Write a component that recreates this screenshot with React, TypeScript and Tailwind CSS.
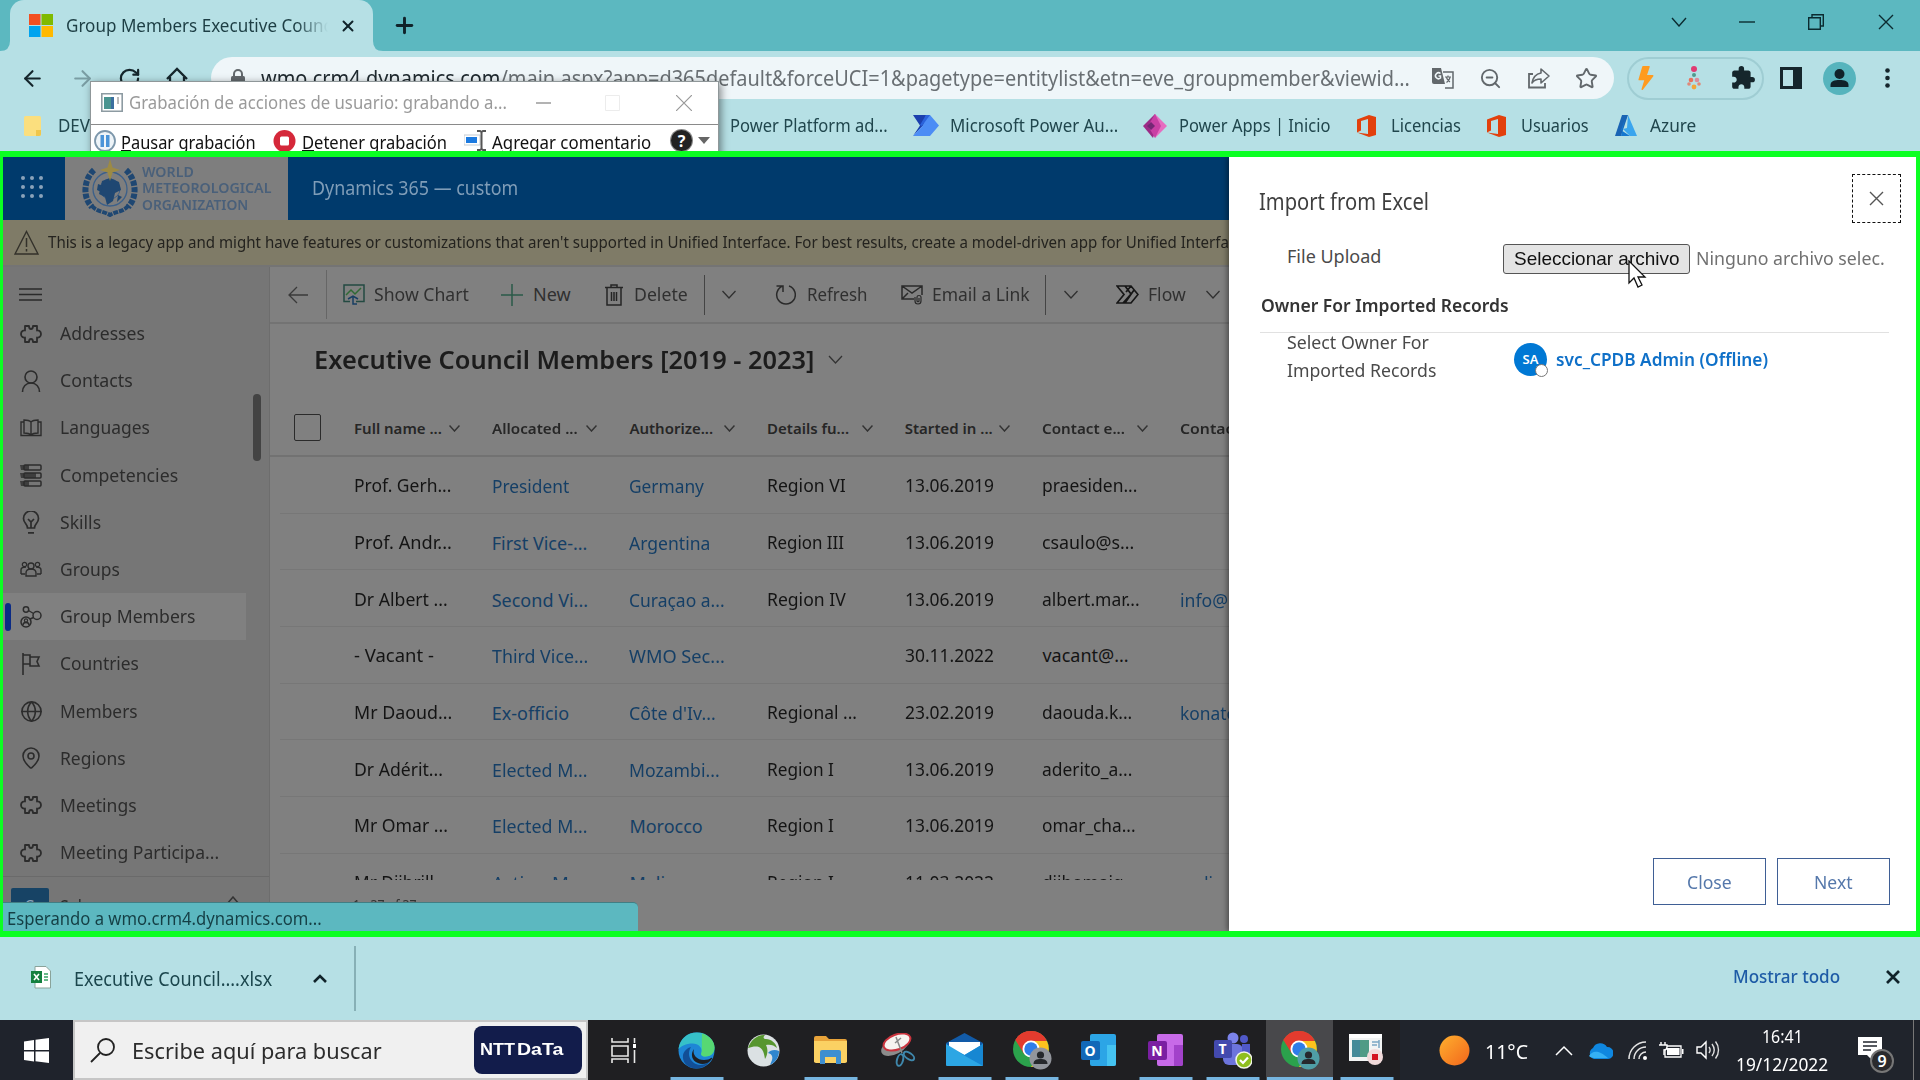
import React, { useLayoutEffect, useRef, useState } from "react";
import { ArrowLeft, ArrowRight, RotateCw, X, Plus, ZoomOut, Star, Globe, MapPin } from "lucide-react";
import { BsLightningFill } from "react-icons/bs";
import { MdExtension } from "react-icons/md";

/* A single line of text condensed or stretched to an exact advance width. */
function Fit({ w, children, className = "" }: { w: number; children: React.ReactNode; className?: string }) {
  const ref = useRef<HTMLSpanElement>(null);
  const [s, setS] = useState(1);
  useLayoutEffect(() => {
    if (ref.current) setS(w / ref.current.offsetWidth);
  }, [w]);
  return (
    <span className={"block shrink-0 " + className} style={{ width: w }}>
      <span ref={ref} className="inline-block origin-left whitespace-pre" style={{ transform: `scaleX(${s})` }}>
        {children}
      </span>
    </span>
  );
}

function Svg({ w, h, box, className = "", children }: { w: number; h: number; box?: string; className?: string; children: React.ReactNode }) {
  return (
    <svg width={w} height={h} viewBox={box ?? `0 0 ${w} ${h}`} fill="none" className={"shrink-0 " + className}>
      {children}
    </svg>
  );
}

/* ---------- browser chrome ---------- */

function TabStrip() {
  return (
    <div className="flex h-[51px] bg-[#5cb8c0]">
      <div className="relative ml-[10px] flex h-full w-[363px] items-center rounded-t-[14px] bg-[#b6e0e5] pl-[19px]">
        <Svg w={24} h={23}>
          <path d="M0 0h11.5v11H0z" fill="#f25022" />
          <path d="M12.5 0H24v11H12.5z" fill="#7fba00" />
          <path d="M0 12h11.5v11H0z" fill="#00a4ef" />
          <path d="M12.5 12H24v11H12.5z" fill="#ffb900" />
        </Svg>
        <div className="ml-[13px] w-[262px] overflow-hidden text-[18px] text-[#1d3e44] [mask-image:linear-gradient(90deg,#000_88%,transparent)]">
          <Fit w={270}>Group Members Executive Counci</Fit>
        </div>
        <X size={18} strokeWidth={2.6} className="ml-[11px] text-[#10232a]" />
        <Svg w={10} h={10} className="absolute bottom-0 -left-[10px]"><path d="M10 0v10H0Q10 10 10 0z" fill="#b6e0e5" /></Svg>
        <Svg w={10} h={10} className="absolute -right-[10px] bottom-0"><path d="M0 0v10h10Q0 10 0 0z" fill="#b6e0e5" /></Svg>
      </div>
      <div className="ml-[19px] flex w-[22px] items-center"><Plus size={25} strokeWidth={2.8} className="shrink-0 text-[#10232a]" /></div>
      <div className="ml-auto flex h-[43px] items-center text-[#0b2b30]">
        <div className="flex w-[68px] justify-center"><Svg w={16} h={10}><path d="M1 1l7 8 7-8" stroke="currentColor" strokeWidth="1.4" /></Svg></div>
        <div className="flex w-[68px] justify-center"><Svg w={16} h={2}><path d="M0 1h16" stroke="currentColor" strokeWidth="1.4" /></Svg></div>
        <div className="flex w-[70px] justify-center"><Svg w={16} h={16}><path d="M.7 3.7h11.6v11.6H.7zM4 3.500V.7h11.300v11.300h-3" stroke="currentColor" strokeWidth="1.4" /></Svg></div>
        <div className="flex w-[69px] justify-center"><Svg w={16} h={16}><path d="M1 1l14 14M15 1L1 15" stroke="currentColor" strokeWidth="1.4" /></Svg></div>
      </div>
    </div>
  );
}

function Toolbar() {
  return (
    <div className="flex h-[54px] items-center text-[#15262c]">
      <ArrowLeft size={25} strokeWidth={2} className="ml-[20px] shrink-0" />
      <ArrowRight size={25} strokeWidth={2} className="ml-[25px] shrink-0 text-[#7a9da3]" />
      <RotateCw size={23} strokeWidth={2.300} className="ml-[23px] shrink-0" />
      <Svg w={24} h={24} className="ml-[24px]"><path d="M2 13L12 3l10 10M5 11v10h14V11" stroke="currentColor" strokeWidth="2.300" /></Svg>
      <div className="ml-[22px] flex h-[42px] w-[1403px] items-center rounded-full bg-[#eff6f9] text-[#62686c]">
        <Svg w={14} h={19} className="ml-[20px]"><rect y="7" width="14" height="12" rx="1.500" fill="#62686c" /><path d="M3 8V5a4 4 0 018 0v3" stroke="#62686c" strokeWidth="2" /></Svg>
        <Fit w={1149} className="mt-[2px] ml-[16px] text-[21px] text-[#696f73]">
          <span className="text-[#202a30]">wmo.crm4.dynamics.com</span>/main.aspx?app=d365default&amp;forceUCI=1&amp;pagetype=entitylist&amp;etn=eve_groupmember&amp;viewid...
        </Fit>
        <Svg w={22} h={22} className="ml-[22px]">
          <path d="M0 1h9l4 16H2a2 2 0 01-2-2z" fill="#62686c" />
          <path d="M11 5h10v16h-8" stroke="#62686c" strokeWidth="1.500" />
          <path d="M8.500 6.500a3 3 0 100 4.500V9H6.500" stroke="#eff6f9" strokeWidth="1.500" />
          <path d="M13 10h6M16 8.500V10M14.500 10.500c.500 2 2 3.500 3.500 4.500M18 10.500c-.500 2-2 4-3.500 5" stroke="#62686c" strokeWidth="1.200" />
        </Svg>
        <ZoomOut size={23} strokeWidth={2} className="ml-[25px] shrink-0" />
        <Svg w={24} h={22} className="ml-[25px]">
          <path d="M6 7H2v13.500h16V16" stroke="#62686c" strokeWidth="1.800" />
          <path d="M14 2l8 7-8 7v-4c-4 0-7 1-9 4 1-6 4-9 9-10z" stroke="#62686c" strokeWidth="1.600" strokeLinejoin="round" />
        </Svg>
        <Star size={23} strokeWidth={2} className="ml-[24px] shrink-0" />
      </div>
      <div className="ml-[13px] flex h-[43px] w-[137px] items-center rounded-full border-2 border-[#9fcdd3]">
        <BsLightningFill size={24} className="ml-[5px] shrink-0 text-[#ff9b1f]" />
        <Svg w={14} h={24} className="ml-[29px]">
          <circle cx="7" cy="3" r="3" fill="#e03a72" /><circle cx="7" cy="9" r="2" fill="#4f9a8c" />
          <circle cx="4" cy="14" r="2.300" fill="#e8705c" /><circle cx="10" cy="14" r="2.300" fill="#d98c9a" />
          <circle cx="2" cy="18" r="1.800" fill="#e08878" /><circle cx="12" cy="18" r="1.800" fill="#e08878" /><circle cx="7" cy="21" r="2.400" fill="#f0a63a" />
        </Svg>
        <MdExtension size={26} className="ml-[29px] shrink-0" />
      </div>
      <Svg w={22} h={22} className="ml-[16px]"><rect x="1.500" y="1.500" width="19" height="19" stroke="currentColor" strokeWidth="3" /><path d="M13 1h8v20h-8z" fill="currentColor" /></Svg>
      <Svg w={33} h={33} className="ml-[21px]"><circle cx="16.500" cy="16.500" r="16.500" fill="#56b4bd" /><circle cx="16.500" cy="12" r="5" fill="#10232a" /><path d="M7.500 25v-2c0-4 4-5 9-5s9 1 9 5v2z" fill="#10232a" /></Svg>
      <Svg w={5} h={20} className="ml-[29px]"><circle cx="2.500" cy="2.500" r="2.300" fill="currentColor" /><circle cx="2.500" cy="10" r="2.300" fill="currentColor" /><circle cx="2.500" cy="17.500" r="2.300" fill="currentColor" /></Svg>
    </div>
  );
}

const Office = () => (
  <Svg w={20} h={22}><path d="M0 4.500L12 0l7 2v18l-7 2L0 17.500l11 1.500V4L4 6v9.500l-4 2z" fill="#e2400c" /></Svg>
);

function Bookmarks() {
  return (
    <div className="flex h-[41px] items-center text-[18px] text-[#20464d]">
      <Svg w={17} h={20} className="ml-[24px]"><rect width="17" height="20" rx="1.500" fill="#fbdf7e" /><path d="M12 14h5v4a2 2 0 01-2 2h-3z" fill="#f0c64a" /></Svg>
      <Fit w={32} className="ml-[17px]">DEV</Fit>
      <Fit w={158} className="ml-[640px]">Power Platform ad...</Fit>
      <Svg w={26} h={21} className="ml-[25px]">
        <path d="M0 0h17l-7 10.500L0 21l7-10.500z" fill="#1b3fae" /><path d="M17 0l9 10.500L17 21H0l10-10.500L13 0z" fill="#4c8df5" /><path d="M13 0h4l-8 11-2-1z" fill="#2b63db" />
      </Svg>
      <Fit w={168} className="ml-[11px]">Microsoft Power Au...</Fit>
      <Svg w={24} h={24} className="ml-[25px]">
        <path d="M12 0L0 12l10 12 4-12z" fill="#9c2a86" /><path d="M12 0l12 12-12 12-3-12z" fill="#e66cc0" /><path d="M12 0l6 12-6 12-7-12z" fill="#c93fa4" /><path d="M8 8l4 4-4 4-4-4z" fill="#742774" />
      </Svg>
      <Fit w={151} className="ml-[12px]">Power Apps | Inicio</Fit>
      <div className="ml-[27px]"><Office /></div>
      <Fit w={70} className="ml-[14px]">Licencias</Fit>
      <div className="ml-[26px]"><Office /></div>
      <Fit w={68} className="ml-[14px]">Usuarios</Fit>
      <Svg w={22} h={21} className="ml-[26px]">
        <path d="M7 0h6L6 21H0z" fill="#1a64b4" /><path d="M13 0l9 21h-7L8 14l4-1z" fill="#3aa5ee" /><path d="M10 4l-4 11 9 6H6z" fill="#1577cf" />
      </Svg>
      <Fit w={46} className="ml-[13px]">Azure</Fit>
    </div>
  );
}

function RecorderWindow() {
  return (
    <div className="absolute top-[81px] left-[90px] h-[76px] w-[629px] overflow-hidden border border-[#8f9799] bg-white shadow-[2px_2px_8px_rgba(0,0,0,0.45)]">
      <div className="flex h-[43px] items-center border-b border-[#8a8a8a] pb-px text-[#9a9a9a]">
        <Svg w={22} h={19} className="ml-[10px]"><path d="M.8.800h20.400v17.400H.8z" fill="#fff" stroke="#8d9ba2" strokeWidth="1.600" /><path d="M3 4h10v12H3z" fill="#4a9490" /><path d="M10 4h3v12h-3z" fill="#3b6f9f" /><path d="M17 4v7" stroke="#777" /></Svg>
        <Fit w={378} className="ml-[6px] text-[18px]">Grabación de acciones de usuario: grabando a...</Fit>
        <Svg w={15} h={2} className="ml-[29px]"><path d="M0 1h15" stroke="#8a8a8a" strokeWidth="1.300" /></Svg>
        <Svg w={15} h={16} className="ml-[54px]"><path d="M.5.500h14v15H.5z" stroke="#ececec" /></Svg>
        <Svg w={16} h={16} className="ml-[56px]"><path d="M0 0l16 16M16 0L0 16" stroke="#999" strokeWidth="1.200" /></Svg>
      </div>
      <div className="flex h-[31px] items-center text-[18px] text-[#111]">
        <Svg w={22} h={22} className="ml-[3px]"><circle cx="11" cy="11" r="10" fill="#eef4f8" stroke="#7d97ab" strokeWidth="1.800" /><path d="M6.500 5h3.500v12H6.500zM12 5h3.500v12H12z" fill="#4b94d8" /></Svg>
        <Fit w={135} className="mt-[4px] ml-[5px]"><u>P</u>ausar grabación</Fit>
        <Svg w={23} h={22} className="ml-[17px]"><circle cx="11.500" cy="11" r="11" fill="#d5283a" /><rect x="7" y="6.500" width="9" height="9" rx="1.500" fill="#fff" /></Svg>
        <Fit w={145} className="mt-[4px] ml-[6px]"><u>D</u>etener grabación</Fit>
        <Svg w={22} h={22} className="ml-[17px]"><path d="M0 5h16v10H0z" fill="#fff" stroke="#c3cbd3" /><path d="M2 7h11v6H2z" fill="#1c7ae0" /><path d="M13 1h3l1.500 1L19 1h3M13 20h3l1.500-1 1.500 1h3M17.500 2v17" stroke="#555" strokeWidth="2" /></Svg>
        <Fit w={159} className="mt-[4px] ml-[6px]">A<u>g</u>regar comentario</Fit>
        <div className="ml-[20px] flex size-[21px] shrink-0 items-center justify-center rounded-full bg-[#222] text-[16px] font-bold text-white ring-1 ring-[#888]">?</div>
        <Svg w={12} h={7} className="ml-[6px]"><path d="M0 0h12L6 7z" fill="#666" /></Svg>
      </div>
    </div>
  );
}

/* ---------- application ---------- */

function Emblem() {
  return (
    <Svg w={56} h={58}>
      <path d="M12 11C2 20 0 38 10 48M44 11c10 9 12 27 2 37" stroke="#1f4772" strokeWidth="6" strokeDasharray="5 1.500" />
      <path d="M10 47c5 6 11 5 18 9 7-4 13-3 18-9" stroke="#1f4772" strokeWidth="4" strokeDasharray="5 1" />
      <circle cx="28" cy="30" r="17" stroke="#3c608a" strokeWidth="1.300" />
      <circle cx="28" cy="30" r="10" stroke="#3c608a" strokeWidth="1" />
      <path d="M20 22l8-3 9 4 2 8-6 3-2 8-6 4-2-8-6-3z" fill="#1f4772" />
      <path d="M16 25l5 2-2 6-4-2zM36 36l4 2-5 5z" fill="#1f4772" />
      <path d="M28 0l2.500 8.500L38 11l-7.500 2.500L28 22l-2.500-8.500L18 11l7.500-2.500z" fill="#9c8a45" />
    </Svg>
  );
}

function AppHeader() {
  return (
    <div className="flex h-[63px] shrink-0 items-center bg-[#003a6c]">
      <div className="flex h-full w-[62px] shrink-0 items-center pb-[4px] pl-[18px]">
        <div className="grid grid-cols-3 gap-x-[5px] gap-y-[5px]">
          {Array.from({ length: 9 }, (_, i) => <span key={i} className="size-[4px] rounded-full bg-[#8aa2ba]" />)}
        </div>
      </div>
      <div className="flex h-full w-[223px] shrink-0 items-center bg-[#7e7e7e] pb-[2px] pl-[17px]">
        <Emblem />
        <div className="ml-[4px] text-[15px] leading-[16.500px] font-semibold text-[#4a607a]">
          <Fit w={52}>WORLD</Fit>
          <Fit w={129}>METEOROLOGICAL</Fit>
          <Fit w={106}>ORGANIZATION</Fit>
        </div>
      </div>
      <Fit w={206} className="ml-[24px] text-[19px] text-[#7f9db8]">Dynamics 365 — custom</Fit>
    </div>
  );
}

const Chev = ({ w = 15, className = "" }: { w?: number; className?: string }) => (
  <Svg w={w} h={9} box="0 0 15 9" className={className}><path d="M1 1l6.500 7L14 1" stroke="currentColor" strokeWidth="1.300" /></Svg>
);

const PuzzleIcon = () => (
  <Svg w={22} h={20} box="0 0 22 20">
    <path d="M5 2h4c0 1.500.500 3 2 3s2-1.500 2-3h4v4.500c1.500-.5 4 .5 4 3.500s-2.500 4-4 3.500V18h-4c0-1.500-.5-3-2-3s-2 1.500-2 3H5v-4.500C3.500 14 1 13 1 10s2.500-4 4-3.500z" stroke="currentColor" strokeWidth="1.800" strokeLinejoin="round" />
  </Svg>
);

const icons: Record<string, React.ReactNode> = {
  puzzle: <PuzzleIcon />,
  person: <Svg w={20} h={22}><circle cx="10" cy="7" r="6" stroke="currentColor" strokeWidth="1.600" /><path d="M1.500 22c0-5.500 3.500-9 8.500-9s8.500 3.500 8.500 9" stroke="currentColor" strokeWidth="1.600" /></Svg>,
  book: <Svg w={22} h={18}><path d="M11 3c-2-2-4-2-7-2v13c3 0 5 0 7 2 2-2 4-2 7-2V1c-3 0-5 0-7 2zM11 3v13M4 3H1v13.500h20V3h-3" stroke="currentColor" strokeWidth="1.400" /></Svg>,
  stack: <Svg w={22} h={23}><rect x="4" y="1" width="17" height="5" rx="1" stroke="currentColor" strokeWidth="1.500" /><rect x="4" y="9" width="17" height="5" rx="1" stroke="currentColor" strokeWidth="1.500" /><rect x="4" y="17" width="17" height="5" rx="1" stroke="currentColor" strokeWidth="1.500" /><path d="M0 1h9v5H1zM0 9h16v5H1zM0 17h9v5H1z" fill="currentColor" fillOpacity=".75" /></Svg>,
  bulb: <Svg w={18} h={23}><path d="M5.500 17c0-4-4-5-4-9.500a7.500 7.500 0 0115 0c0 4.500-4 5.500-4 9.500zM6 21.800h6M6 8l3 3 3-3M9 11v6" stroke="currentColor" strokeWidth="1.700" /></Svg>,
  groups: <Svg w={22} h={17}><circle cx="11" cy="5" r="3" stroke="currentColor" strokeWidth="1.400" /><circle cx="4.500" cy="3.500" r="2.200" stroke="currentColor" strokeWidth="1.200" /><circle cx="17.500" cy="3.500" r="2.200" stroke="currentColor" strokeWidth="1.200" /><path d="M6 15V12c0-2.500 2-4 5-4s5 1.500 5 4v3zM1 13V9c0-2 2-3 5-3M21 13V9c0-2-2-3-5-3M1 13h4M17 13h4" stroke="currentColor" strokeWidth="1.400" /></Svg>,
  members: <Svg w={22} h={22}><circle cx="6" cy="3.500" r="2.700" stroke="currentColor" strokeWidth="1.500" /><circle cx="17" cy="9.500" r="4" stroke="currentColor" strokeWidth="1.500" /><circle cx="6" cy="16" r="5" stroke="currentColor" strokeWidth="1.500" /><circle cx="6" cy="14.500" r="1.600" stroke="currentColor" strokeWidth="1.200" /><path d="M3 19c0-2 1.500-2.500 3-2.500s3 .5 3 2.500M8.500 4.500l5 3M10 13l3.500-1.500" stroke="currentColor" strokeWidth="1.400" /></Svg>,
  flag: <Svg w={20} h={22}><path d="M2 0v22M2 2h7v9H2M9 4h9l-2 4.500 2 4.500H9V4" stroke="currentColor" strokeWidth="1.600" /></Svg>,
  globe: <Globe size={23} strokeWidth={1.7} />,
  pin: <MapPin size={24} strokeWidth={1.6} />,
};

const nav: [string, string, number][] = [
  ["puzzle", "Addresses", 85], ["person", "Contacts", 73], ["book", "Languages", 90], ["stack", "Competencies", 118],
  ["bulb", "Skills", 41], ["groups", "Groups", 60], ["members", "Group Members", 136], ["flag", "Countries", 79],
  ["globe", "Members", 78], ["pin", "Regions", 66], ["puzzle", "Meetings", 77], ["puzzle", "Meeting Participa...", 159],
];

function Sidebar() {
  return (
    <div className="relative flex w-[267px] shrink-0 flex-col border-r border-[#6d6d6d] bg-[#767676] text-[#2c2c2c]">
      <div className="flex h-[43px] shrink-0 items-end pb-[9px] pl-[16px]">
        <Svg w={23} h={13}><path d="M0 1h23M0 6.500h23M0 12h23" stroke="#2a2a2a" strokeWidth="1.400" /></Svg>
      </div>
      <div className="flex shrink-0 flex-col">
        {nav.map(([icon, label, w]) => (
          <div key={label} className={"flex h-[47.200px] w-[243px] items-center " + (label === "Group Members" ? "bg-[#808080]" : "")}>
            <span className={"ml-[2px] h-[28px] w-[6px] rounded-full " + (label === "Group Members" ? "bg-[#0a2a85]" : "")} />
            <span className="ml-[7px] flex w-[26px] justify-center">{icons[icon]}</span>
            <Fit w={w} className="ml-[16px] text-[18px]">{label}</Fit>
          </div>
        ))}
      </div>
      <div className="flex h-[60px] shrink-0 items-start border-t border-[#6a6a6a] pt-[11px]">
        <div className="ml-[8px] flex h-[38px] w-[38px] justify-center rounded-[2px] bg-[#174365] pt-[5px] text-[17px] text-[#90a5b8]">S</div>
        <Fit w={38} className="mt-[5px] ml-[11px] text-[18px]">Sales</Fit>
        <Svg w={14} h={9} className="mt-[8px] ml-[128px]"><path d="M1 8l6-7 6 7" stroke="#333" strokeWidth="1.500" /></Svg>
      </div>
      <span className="absolute top-[127px] right-[8px] h-[67px] w-[8px] rounded-full bg-[#434343]" />
    </div>
  );
}

function CommandBar() {
  return (
    <div className="flex h-[57px] shrink-0 items-center border-b-2 border-[#737373] text-[18px] text-[#303030]">
      <Svg w={20} h={18} className="ml-[18px]"><path d="M20 9H1M9 1L1 9l8 8" stroke="#3a3a3a" strokeWidth="1.300" /></Svg>
      <span className="ml-[18px] h-[49px] w-px shrink-0 bg-[#666]" />
      <Svg w={22} h={21} className="ml-[16px]"><path d="M13 17.500h8V1H1v16.500h6" stroke="#234a42" strokeWidth="1.500" /><path d="M3 11l5-5 4 4 6-6" stroke="#2f6a34" strokeWidth="1.500" /><path d="M5 15l5-3 5 3M10 13v7h4" stroke="#173e63" strokeWidth="1.500" /></Svg>
      <Fit w={95} className="ml-[9px]">Show Chart</Fit>
      <Svg w={22} h={22} className="ml-[32px]"><path d="M11 0v22M0 11h22" stroke="#2a5a48" strokeWidth="1.500" /></Svg>
      <Fit w={38} className="ml-[10px]">New</Fit>
      <Svg w={18} h={22} className="ml-[34px]"><path d="M0 3.500h18M6 3V1h6v2M2 4v17h14V4M6.500 8v9M9 8v9M11.500 8v9" stroke="#252525" strokeWidth="1.500" /></Svg>
      <Fit w={54} className="ml-[11px]">Delete</Fit>
      <span className="ml-[16px] h-[40px] w-px shrink-0 bg-[#444]" />
      <Chev w={16} className="ml-[16px]" />
      <Svg w={21} h={22} className="ml-[38px]"><path d="M8 2a9.300 9.300 0 106 0M1.500 2H8v6" stroke="#2a2a2a" strokeWidth="1.500" /></Svg>
      <Fit w={61} className="ml-[11px]">Refresh</Fit>
      <Svg w={22} h={20} className="ml-[33px]"><path d="M13 14H1V1h20v9M1 1l10 7L21 1M1 14l6-6" stroke="#2a2a2a" strokeWidth="1.500" /><path d="M14 12v4c0 4 6 4 6 0v-4c0-2-4-2-4 0v4c0 1 2 1 2 0v-3" stroke="#2a2a2a" strokeWidth="1.200" /></Svg>
      <Fit w={98} className="ml-[9px]">Email a Link</Fit>
      <span className="ml-[15px] h-[40px] w-px shrink-0 bg-[#444]" />
      <Chev w={16} className="ml-[17px]" />
      <Svg w={23} h={19} className="ml-[37px]"><path d="M1 1h14l7 8.500-7 8.500H1l7-8.500zM9 1l6 8-8 9M15 1l-5 6M18 5l-9 13" stroke="#161616" strokeWidth="1.700" /></Svg>
      <Fit w={38} className="ml-[9px]">Flow</Fit>
      <Chev w={16} className="ml-[19px]" />
    </div>
  );
}

const columns: [string, number][] = [
  ["Full name ...", 88], ["Allocated ...", 86], ["Authorize...", 84], ["Details fu...", 82], ["Started in ...", 88], ["Contact e...", 83], ["Contact", 60],
];

const rows: string[][] = [
  ["Prof. Gerh...", "President", "Germany", "Region VI", "13.06.2019", "praesiden...", ""],
  ["Prof. Andr...", "First Vice-...", "Argentina", "Region III", "13.06.2019", "csaulo@s...", ""],
  ["Dr Albert ...", "Second Vi...", "Curaçao a...", "Region IV", "13.06.2019", "albert.mar...", "info@"],
  ["- Vacant -", "Third Vice...", "WMO Sec...", "", "30.11.2022", "vacant@...", ""],
  ["Mr Daoud...", "Ex-officio", "Côte d'Iv...", "Regional ...", "23.02.2019", "daouda.k...", "konate"],
  ["Dr Adérit...", "Elected M...", "Mozambi...", "Region I", "13.06.2019", "aderito_a...", ""],
  ["Mr Omar ...", "Elected M...", "Morocco", "Region I", "13.06.2019", "omar_cha...", ""],
  ["Mr Djibrill...", "Acting M...", "Mali", "Region I", "11.03.2022", "djibomaig...", "sadig"],
];

const widths: number[][] = [
  [97, 77, 75, 79, 89, 95, 0], [98, 96, 81, 77, 89, 92, 0], [94, 96, 96, 79, 89, 98, 48], [80, 96, 96, 0, 89, 86, 0],
  [98, 77, 87, 90, 89, 90, 56], [89, 96, 91, 67, 89, 90, 0], [94, 96, 73, 67, 89, 94, 0], [94, 92, 36, 67, 89, 95, 44],
];

function Grid() {
  return (
    <div className="flex h-[480px] shrink-0 flex-col overflow-hidden">
      <div className="flex h-[57px] shrink-0 items-center border-b-2 border-[#727272]">
        <span className="ml-[24px] size-[27px] shrink-0 rounded-[2px] border-[1.500px] border-[#2b2b2b]" />
        <div className="ml-[33px] flex pt-px">
          {columns.map(([label, w]) => (
            <div key={label} className="flex w-[137.700px] shrink-0 items-center justify-between pr-[32px] text-[15px] font-semibold text-[#262626]">
              <Fit w={w}>{label}</Fit>
              {label !== "Contact" && <Svg w={11} h={7}><path d="M.5.500l5 5.500 5-5.500" stroke="#333" strokeWidth="1.500" /></Svg>}
            </div>
          ))}
        </div>
      </div>
      {rows.map((cells, r) => (
        <div key={r} className="ml-[10px] flex h-[56.700px] shrink-0 items-center border-b border-[#777] pt-[2px] pl-[74px] text-[18px]">
          {cells.map((cell, c) => {
            const link = c === 1 || c === 2 || c === 6;
            return (
              <div key={c} className={"w-[137.700px] shrink-0 " + (link ? "pt-[2px] text-[#153f66]" : "text-[#141414]")}>
                {cell && <Fit w={widths[r][c]}>{cell}</Fit>}
              </div>
            );
          })}
        </div>
      ))}
    </div>
  );
}

function ImportPanel() {
  return (
    <div className="relative flex w-[687px] shrink-0 flex-col bg-white text-[#3f3f3f] shadow-[-2px_0_5px_rgba(0,0,0,0.4)]">
      <div className="flex h-[66px] pl-[30px]">
        <Fit w={170} className="mt-[27px] text-[23px] leading-[34px]">Import from Excel</Fit>
        <div className="mt-[17px] ml-[423px] flex h-[49px] w-[49px] items-center justify-center border border-dashed border-[#111]">
          <Svg w={15} h={15}><path d="M1 1l13 13M14 1L1 14" stroke="#555" strokeWidth="1.400" /></Svg>
        </div>
      </div>
      <div className="mt-[21px] flex h-[30px] pl-[58px] text-[18px]">
        <Fit w={94} className="leading-[25px] text-[#4a4a4a]">File Upload</Fit>
        <div className="ml-[122px] flex h-[30px] w-[187px] items-center justify-center rounded-[3px] border border-[#555] bg-[#e4e4e4] font-['Liberation_Sans'] text-[18.500px] text-[#111]">
          <Fit w={165}>Seleccionar archivo</Fit>
        </div>
        <Fit w={189} className="ml-[6px] leading-[29px] text-[#717171]">Ninguno archivo selec.</Fit>
      </div>
      <div className="mt-[17px] ml-[31px] h-[42px] w-[629px] border-b border-[#e1e1e1]">
        <Fit w={248} className="ml-px text-[18px] leading-[29px] font-semibold text-[#333]">Owner For Imported Records</Fit>
      </div>
      <div className="flex pl-[58px]">
        <div className="w-[216px] shrink-0 text-[18px] leading-[28px] text-[#4a4a4a]">
          <Fit w={142} className="-mt-[5px]">Select Owner For</Fit>
          <Fit w={149}>Imported Records</Fit>
        </div>
        <div className="mt-[10px] ml-[11px] flex h-[33px] items-center">
          <div className="relative flex size-[33px] items-center justify-center rounded-full bg-[#0078d4] text-[13px] font-semibold text-white">
            SA
            <span className="absolute -right-[1px] -bottom-[1px] size-[13px] rounded-full border border-[#777] bg-white" />
          </div>
          <Fit w={212} className="ml-[9px] text-[18px] font-semibold text-[#0f70c8]">svc_CPDB Admin (Offline)</Fit>
        </div>
      </div>
      <div className="mt-auto mb-[26px] flex justify-end gap-[11px] pr-[26px] text-[18px] text-[#5578ab]">
        <div className="flex h-[47px] w-[113px] items-center justify-center border border-[#3f5f95] pt-px"><Fit w={45}>Close</Fit></div>
        <div className="flex h-[47px] w-[113px] items-center justify-center border border-[#3f5f95] pt-px"><Fit w={39}>Next</Fit></div>
      </div>
      <Svg w={19} h={29} className="absolute top-[103px] left-[399px]">
        <path d="M1 1v22l5-5 4 9 4-2-4-8h7z" fill="#fff" stroke="#111" strokeWidth="1.300" />
      </Svg>
    </div>
  );
}

function AppFrame() {
  return (
    <div className="relative flex h-[786px] overflow-hidden border-y-[6px] border-r-[4px] border-l-[3px] border-[#0bff22] bg-[#808080]">
      <div className="flex w-[1226px] shrink-0 flex-col overflow-hidden">
        <AppHeader />
        <div className="flex h-[45px] shrink-0 items-center bg-[#7f7b67] text-[15.500px] text-[#24231f]">
          <Svg w={25} h={25} className="ml-[11px]"><path d="M12.500 1.500L24 24H1z" stroke="#33312a" strokeWidth="1.400" /><path d="M12.500 8v9M12.500 19v2.500" stroke="#33312a" strokeWidth="1.500" /></Svg>
          <Fit w={1181} className="ml-[9px]">This is a legacy app and might have features or customizations that aren't supported in Unified Interface. For best results, create a model-driven app for Unified Interfa</Fit>
        </div>
        <div className="flex min-h-0 grow border-t-2 border-[#747474]">
          <Sidebar />
          <div className="flex w-[959px] shrink-0 flex-col">
            <CommandBar />
            <div className="flex h-[76px] shrink-0 items-center pb-[6px] pl-[44px]">
              <Fit w={501} className="text-[26px] font-semibold text-[#1c1c1c]">Executive Council Members [2019 - 2023]</Fit>
              <Chev w={17} className="ml-[12px] text-[#333]" />
            </div>
            <Grid />
            <Fit w={64} className="mt-[13px] ml-[83px] text-[15px] leading-[22px] text-[#333]">1 - 37 of 37</Fit>
          </div>
        </div>
      </div>
      <ImportPanel />
      <div className="absolute bottom-0 left-0 flex h-[29px] w-[635px] items-center rounded-tr-[5px] border-t border-[#417e84] bg-[#5cb8c0] pt-[3px] pl-[4px] text-[17.500px] text-[#153f45]">
        <Fit w={315}>Esperando a wmo.crm4.dynamics.com...</Fit>
      </div>
    </div>
  );
}

/* ---------- downloads shelf and task bar ---------- */

function Downloads() {
  return (
    <div className="flex h-[83px] items-center bg-[#b6e0e5] text-[#1b464d]">
      <Svg w={20} h={23} className="-mt-[3px] ml-[31px]"><path d="M4 .500h11l4.500 4.500v17H4z" fill="#fff" stroke="#8aa39a" /><path d="M0 5h11v12H0z" fill="#14803f" /><path d="M3 8l5 6M8 8l-5 6" stroke="#fff" strokeWidth="1.600" /><path d="M13 8h4M13 11h4M13 14h4" stroke="#37a163" strokeWidth="1.500" /></Svg>
      <Fit w={198} className="mt-[2px] ml-[23px] text-[19px]">Executive Council....xlsx</Fit>
      <Svg w={14} h={9} className="ml-[41px]"><path d="M1 8l6-6 6 6" stroke="#10232a" strokeWidth="2.600" /></Svg>
      <span className="ml-[27px] h-[65px] w-[2px] bg-[#87b0b6]" />
      <Fit w={107} className="-mt-[5px] ml-auto text-[18px] font-medium text-[#1e5ba6]">Mostrar todo</Fit>
      <Svg w={14} h={14} className="-mt-[3px] mr-[20px] ml-[46px]"><path d="M1 1l12 12M13 1L1 13" stroke="#10232a" strokeWidth="2.700" /></Svg>
    </div>
  );
}

function Chrome({ badge }: { badge: string }) {
  return (
    <Svg w={40} h={40}>
      <circle cx="19" cy="19" r="18" fill="#2ba24c" />
      <path d="M19 19L3.400 10A18 18 0 0134.600 10z" fill="#e33b2e" /><path d="M19 1a18 18 0 00-15.600 9L12 24l7-13h15.600A18 18 0 0019 1z" fill="#e33b2e" />
      <path d="M19 11h15.900A18 18 0 0119 37l8-14z" fill="#fcc31e" />
      <circle cx="19" cy="19" r="8.500" fill="#fff" /><circle cx="19" cy="19" r="6.700" fill="#2e7de9" />
      <circle cx="28.500" cy="28.500" r="11" fill={badge} /><circle cx="28.500" cy="25" r="3.600" fill="#26282c" /><path d="M21.500 34c0-4 3-5 7-5s7 1 7 5z" fill="#26282c" />
    </Svg>
  );
}

const Edge = () => (
  <Svg w={37} h={37}>
    <circle cx="18.500" cy="18.500" r="18" fill="#1e86d6" />
    <path d="M.5 17C2 6 10 .500 19 .500c11 0 17.500 8 17.500 15 0 6-4 9-9 9-4 0-5-2-4-4 1-5-3-9-9-9C8 11.500 3 14 .5 17z" fill="#36c0c8" />
    <path d="M24 1.500c8 2.500 12.500 8 12.500 14 0 6-4 9-9 9-4 0-5-2-4-4 1-2 0-7 .5-19z" fill="#57d873" />
    <path d="M13 15c-5 8 0 17 9 18 5 0 9-3 11-6-3 6-8 9.500-15 9.500C9 36 4 30 5 23c1-4 4-7 8-8z" fill="#124f97" />
    <path d="M16 17c-2 6 3 11 10 11 3 0 6-1 7-2 2-1 1 1 0 2-3 4-9 5-13 3-6-2-8-9-4-14z" fill="#1f1f22" />
  </Svg>
);

function OfficeTile({ letter, base, light, dark }: { letter: string; base: string; light: string; dark: string }) {
  return (
    <div className="relative h-[34px] w-[36px]">
      <Svg w={36} h={34}><rect x="9" y="1" width="26" height="32" rx="2" fill={light} /><path d="M26 12h9v19a2 2 0 01-2 2h-7z" fill={dark} opacity=".7" /><rect y="8" width="19" height="19" rx="2" fill={base} /></Svg>
      <span className="absolute top-[8px] left-0 w-[19px] text-center text-[14px] leading-[19px] font-bold text-white">{letter}</span>
    </div>
  );
}

const apps: { icon: React.ReactNode; open?: boolean; active?: boolean }[] = [
  { icon: <Edge />, open: true },
  { icon: <Svg w={33} h={33}><circle cx="16.500" cy="16.500" r="16" fill="#dbe1e3" /><path d="M1 14C4 6 10 1 18 1c-2 2-2 4 1 4 5 0 10 4 11 9-3-3-7-4-11-3 2 4 2 9-1 14-1-6-2-10-6-12-4-1-7 0-11 1z" fill="#57962f" /><path d="M32 17c-4-2-9-1-11 2 4 1 5 4 4 7l-2 5c6-3 9-8 9-14z" fill="#2f86cf" /></Svg> },
  { icon: <Svg w={33} h={29}><path d="M0 2a2 2 0 012-2h10l3 3h16a2 2 0 012 2v21H0z" fill="#e8a33a" /><path d="M0 5h33v20a2 2 0 01-2 2H2a2 2 0 01-2-2z" fill="#fbd163" /><path d="M6 28V16a2 2 0 012-2h17a2 2 0 012 2v12h-5v-7H11v7z" fill="#3f8fd0" /></Svg>, open: true },
  { icon: <Svg w={36} h={34}><ellipse cx="15" cy="13" rx="15" ry="8" transform="rotate(-28 15 13)" fill="#8c8c8c" /><ellipse cx="17" cy="9" rx="14" ry="7.500" transform="rotate(-20 17 9)" fill="#f6f3f0" stroke="#c9343e" strokeWidth="2" /><path d="M16 4l6 16M21 5l-6 5" stroke="#888" strokeWidth="1.500" /><ellipse cx="20" cy="27" rx="3" ry="6" transform="rotate(15 20 27)" stroke="#3f88ad" strokeWidth="2" /><ellipse cx="29" cy="23" rx="3" ry="6" transform="rotate(-55 29 23)" stroke="#3f88ad" strokeWidth="2" /></Svg> },
  { icon: <Svg w={37} h={34}><path d="M0 10L18.500 0 37 10v6H0z" fill="#125ba8" /><path d="M3 9h31v14H3z" fill="#fff" /><path d="M0 11l18.500 11L37 11v21a1 1 0 01-1 1H1a1 1 0 01-1-1z" fill="#2ca6e4" /><path d="M37 11v22L12 19l6.500 3z" fill="#1787d2" /></Svg>, open: true },
  { icon: <Chrome badge="#92959c" />, open: true },
  { icon: <OfficeTile letter="O" base="#1268b8" light="#2ca5e6" dark="#50d0f5" /> },
  { icon: <OfficeTile letter="N" base="#7a1fa2" light="#c76ae8" dark="#9332bd" />, open: true },
  {
    icon: (
      <div className="relative h-[37px] w-[38px]">
        <Svg w={38} h={37}><circle cx="19" cy="6" r="5.500" fill="#7b83eb" /><circle cx="30" cy="7" r="4" fill="#5059c9" /><rect x="9" y="12" width="20" height="21" rx="6" fill="#6c74dc" /><path d="M28 12h8v10a6 6 0 01-8 6z" fill="#5059c9" /><rect y="8" width="18" height="18" rx="2" fill="#4349ae" /><circle cx="30" cy="28" r="8" fill="#8fbf1f" stroke="#f2f5e8" strokeWidth="1.500" /><path d="M26 28l3 3 5-5.500" stroke="#fff" strokeWidth="2.200" /></Svg>
        <span className="absolute top-[8px] left-0 w-[18px] text-center text-[14px] leading-[18px] font-bold text-white">T</span>
      </div>
    ),
    open: true,
  },
  { icon: <Chrome badge="#4f9ea6" />, open: true, active: true },
  { icon: <Svg w={36} h={32}><path d="M0 0h33v27H0z" fill="#f2f4f4" /><path d="M0 0h33v4H0z" fill="#fff" /><path d="M3 6h17v17H3z" fill="#4f9b86" /><path d="M3 6h8v17H3z" fill="#3d7fa6" opacity=".6" /><path d="M23 8h7M23 11h5M30 6v8" stroke="#7ba7c4" strokeWidth="1.500" /><circle cx="26" cy="23" r="8" fill="#f1dada" /><path d="M23 20h6v6h-6z" fill="#d3121f" /></Svg>, open: true },
];

function Taskbar() {
  return (
    <div className="flex h-[60px] items-center overflow-hidden bg-[#1f1f22] text-white">
      <div className="flex h-full w-[73px] shrink-0 items-center justify-center bg-[#1f232c]">
        <Svg w={25} h={25}><path d="M0 3.500L10 2v10H0zM11.500 1.800L25 0v12H11.500zM0 13.500h10v10L0 22zM11.500 13.500H25V25l-13.500-1.800z" fill="#fff" /></Svg>
      </div>
      <div className="flex h-full w-[515px] shrink-0 items-center border-2 border-[#c6c6c6] bg-[#f0f0f0] text-[#2c2c2c]">
        <Svg w={25} h={25} className="ml-[15px]"><circle cx="16" cy="9" r="8" stroke="#222" strokeWidth="1.800" /><path d="M10 15L1 24" stroke="#222" strokeWidth="1.800" /></Svg>
        <Fit w={250} className="mt-[2px] ml-[17px] text-[22.500px]">Escribe aquí para buscar</Fit>
        <div className="ml-[92px] flex h-[48px] w-[108px] items-center rounded-[8px] bg-[#121c4b] pl-[6px] font-['Liberation_Sans'] text-[17px] font-bold text-white">
          <Fit w={35}>NTT</Fit>
          <Fit w={46} className="ml-[2px]">DaTa</Fit>
        </div>
      </div>
      <div className="flex w-[75px] shrink-0 items-center pl-[23px]">
        <Svg w={26} h={25}><path d="M1 0v4h16V0M1 8h16v10H1zM1 25v-4h16v4M23.500 0v5M23.500 12v13" stroke="#e8e8e8" strokeWidth="1.600" /><path d="M22 6h3v4h-3z" fill="#fff" /></Svg>
      </div>
      {apps.map((a, i) => (
        <div key={i} className={"relative flex h-full w-[67px] shrink-0 items-center justify-center " + (a.active ? "bg-[#48484b]" : "")}>
          {a.icon}
          {a.open && <span className={"absolute bottom-0 left-1/2 h-[3px] -translate-x-1/2 bg-[#76b5e0] " + (a.active ? "w-[66px]" : "w-[53px]")} />}
        </div>
      ))}
      <div className="flex h-full grow items-center bg-[#20242c]">
        <Svg w={31} h={31} className="ml-[39px]"><defs><linearGradient id="sun" x2="1" y2="1"><stop stopColor="#ffb02e" /><stop offset="1" stopColor="#f2661c" /></linearGradient></defs><circle cx="15.500" cy="15.500" r="15" fill="url(#sun)" /></Svg>
        <Fit w={43} className="mt-[3px] ml-[15px] text-[20px]">11°C</Fit>
        <Svg w={18} h={11} className="ml-[27px]"><path d="M1 10l8-8 8 8" stroke="#fff" strokeWidth="1.500" /></Svg>
        <Svg w={25} h={17} className="ml-[15px]"><path d="M6 17a6 6 0 01-1-11 8 8 0 0114-1 6 6 0 011 12z" fill="#0f87e0" /><path d="M1 14C4 9 10 7 20 16H6c-2 0-4-1-5-2z" fill="#35b0f5" /></Svg>
        <Svg w={20} h={19} className="ml-[15px]"><path d="M1 18A17 17 0 0118 1M6 18A12 12 0 0118 6M11 18a7 7 0 017-7" stroke="#e4e4e4" strokeWidth="1.500" /><circle cx="17" cy="17" r="2" fill="#fff" /></Svg>
        <Svg w={25} h={16} className="ml-[11px]"><path d="M6 4h16v11H6z" stroke="#fff" strokeWidth="1.300" /><path d="M8 6h12.500v7H8zM23 7h1.500v5H23z" fill="#fff" /><path d="M2 0v3M6 0v3M0 3h8v2c0 2-1 3-3 3v5" stroke="#fff" strokeWidth="1.400" fill="#20242c" /></Svg>
        <Svg w={24} h={20} className="ml-[12px]"><path d="M1 7h4l5-5v16l-5-5H1z" stroke="#fff" strokeWidth="1.400" /><path d="M13 7c1.500 2 1.500 4 0 6M16 4c3 4 3 8 0 12M19.500 1.500c4 5 4 12 0 17" stroke="#ddd" strokeWidth="1.400" /></Svg>
        <div className="ml-[16px] flex w-[92px] flex-col items-center gap-[1px] text-[17.500px] leading-[27px]">
          <Fit w={41}>16:41</Fit>
          <Fit w={92}>19/12/2022</Fit>
        </div>
        <div className="relative mt-[10px] ml-[30px] h-[36px] w-[37px]">
          <Svg w={25} h={24}><path d="M0 0h24v18h-9v6l-6-6H0z" fill="#fff" /><path d="M5 5h14M5 9h14M5 13h8" stroke="#20242c" strokeWidth="1.300" /></Svg>
          <span className="absolute top-[12px] left-[12px] flex size-[24px] items-center justify-center rounded-full border-2 border-[#777] bg-[#2a2a2d] text-[16px] font-semibold">9</span>
        </div>
        <span className="mr-[6px] ml-auto h-full w-px bg-[#777]" />
      </div>
    </div>
  );
}

export default function App() {
  return (
    <div className="relative flex h-[1080px] w-[1920px] flex-col overflow-hidden bg-[#b6e0e5] font-['Noto_Sans',sans-serif]">
      <TabStrip />
      <div className="h-[100px] shrink-0">
        <Toolbar />
        <Bookmarks />
      </div>
      <RecorderWindow />
      <div className="relative">
        <AppFrame />
      </div>
      <Downloads />
      <Taskbar />
    </div>
  );
}
